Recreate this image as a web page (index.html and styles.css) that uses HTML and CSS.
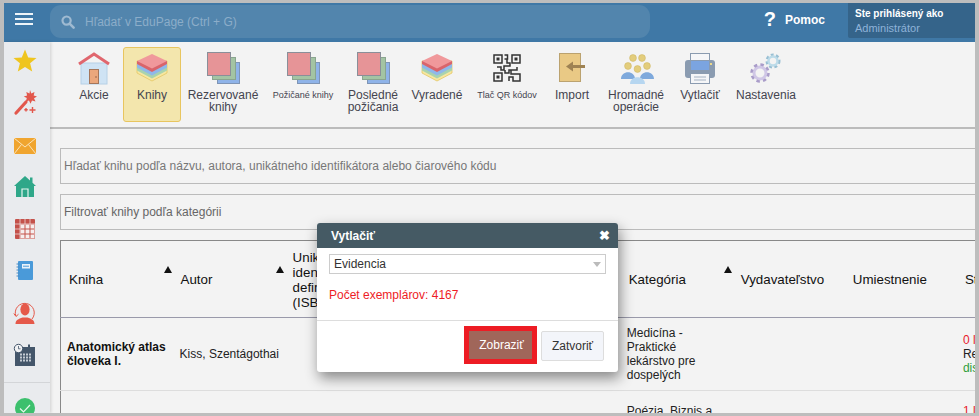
FILE: index.html
```html
<!DOCTYPE html>
<html lang="sk">
<head>
    <meta charset="UTF-8">
    <meta name="viewport" content="width=device-width, initial-scale=1.0">
    <title>Knižnica - EduPage</title>
    <link rel="stylesheet" href="styles.css">
</head>
<body>
<section class="frame">
    <header class="topbar">
        <div class="menu-btn"><span></span><span></span><span></span></div>
        <div class="search">
            <svg class="search-icon" width="14" height="14" viewBox="0 0 14 14"><circle cx="5.6" cy="5.6" r="4.1" fill="none" stroke="#9fbad1" stroke-width="2.2"/><path d="M8.6 8.6l4 4" stroke="#9fbad1" stroke-width="2.6" stroke-linecap="round"/></svg>
            <span>Hľadať v EduPage (Ctrl + G)</span>
        </div>
        <div class="help"><b>?</b><span>Pomoc</span></div>
        <div class="user">
            <strong>Ste prihlásený ako</strong>
            <span>Administrátor</span>
        </div>
    </header>
    <div class="content">
        <nav class="sidebar">
            <div class="side-item"><svg width="30" height="30" viewBox="0 0 30 30"><path d="M15 2.5l3.2 7.9 8.3.6-6.4 5.3 2.1 8.2L15 20.1l-7.200 4.400 2.100-8.200L3.500 11l8.300-.6z" fill="#efc51f"/></svg></div>
            <div class="side-item"><svg width="30" height="30" viewBox="0 0 30 30"><path d="M6 24L16 13" stroke="#e2574c" stroke-width="3.200" stroke-linecap="round"/><path d="M20 1l1.300 3.500L24.500 3l-.8 3.500 3.300 1-3 1.800 1.500 3.200-3.500-1-1.500 3.200-1.500-3.200-3.200 1 1-3.400-3-1.600 3.300-1-.8-3.500 3.200 1.500z" fill="#e2574c"/><path d="M22.500 18v6M19.500 21h6M16 19v3.500M14.300 20.800h3.400" stroke="#e2574c" stroke-width="1.400"/></svg></div>
            <div class="side-item"><svg width="30" height="30" viewBox="0 0 30 30"><rect x="4" y="7" width="22" height="16" fill="#f0a52f"/><path d="M4 7l11 9 11-9M4 23l7.500-9.500M26 23l-7.500-9.500" fill="none" stroke="#fbe3b8" stroke-width="1"/></svg></div>
            <div class="side-item"><svg width="30" height="30" viewBox="0 0 30 30"><path d="M15 3l5 4.500V4.500h2.500v5.200L26 13h-2v11H6V13H4z" fill="#2fa789"/><path d="M12 24v-8h6v8" fill="none" stroke="#e6f5f0" stroke-width="1.200"/></svg></div>
            <div class="side-item"><svg width="30" height="30" viewBox="0 0 30 30"><rect x="5" y="4" width="20" height="20" rx="1" fill="#c4524b"/><path d="M10 4v20M15 4v20M20 4v20M5 9h20M5 14h20M5 19h20" stroke="#eed6d4" stroke-width=".8"/><rect x="10.500" y="9.500" width="14" height="14" fill="#f6eeee"/><path d="M15 9.500v14M20 9.500v14M10.500 14h14M10.500 19h14" stroke="#c4524b" stroke-width="1"/></svg></div>
            <div class="side-item"><svg width="30" height="30" viewBox="0 0 30 30"><rect x="8" y="4" width="15" height="19" rx="1" fill="#4a9ad9"/><path d="M6.500 7h3M6.500 10h3M6.500 13h3M6.500 16h3M6.500 19h3" stroke="#4a8cc4" stroke-width="1"/><rect x="12" y="7" width="8" height="4.500" fill="#e8f2fa"/><path d="M13 9.200h6" stroke="#4a9ad9" stroke-width="1"/></svg></div>
            <div class="side-item"><svg width="30" height="30" viewBox="0 0 30 30"><path d="M5.800 17A9.500 9.500 0 1 1 22 20" fill="none" stroke="#e5594a" stroke-width="1"/><path d="M3.800 14.500l2.200 3 2.500-2.300" fill="none" stroke="#e5594a" stroke-width="1"/><ellipse cx="15" cy="10.500" rx="4.600" ry="6" fill="#e5594a"/><path d="M5.500 25c0-4 3-5 7-6.500h5c4 1.500 7 2.500 7 6.500z" fill="#e5594a"/></svg></div>
            <div class="side-item"><svg width="30" height="30" viewBox="0 0 30 30"><rect x="5" y="6" width="20" height="19" fill="#44566a"/><rect x="18" y="3.500" width="2" height="4" fill="#44566a"/><circle cx="8.500" cy="7.500" r="4.200" fill="#f1f2f4" stroke="#44566a" stroke-width="1"/><path d="M8.500 5v2.800h2" fill="none" stroke="#44566a" stroke-width=".8"/><path d="M10 13.500h11M10 16.500h11M10 19.500h11" stroke="#c5ccd4" stroke-width="2" stroke-dasharray="2 1"/></svg></div>
            <div class="side-divider"></div>
            <div class="side-check"><svg width="24" height="24" viewBox="0 0 24 24"><circle cx="12" cy="12" r="10" fill="#3cc06d"/><path d="M7 12.500l3.500 3.500 6.500-7" fill="none" stroke="#e6f8ec" stroke-width="1.200"/></svg></div>
        </nav>
        <main class="main">
            <div class="toolbar">
                <div class="tool">
                    <svg width="36" height="36" viewBox="0 0 36 36"><rect x="5" y="13" width="26" height="21" fill="#cfe3f4" stroke="#b6d0e6"/><path d="M3 14L18 4l15 10" fill="none" stroke="#e0666e" stroke-width="3"/><rect x="13.500" y="19.500" width="9" height="14" fill="#eba77c" stroke="#a5765a"/><circle cx="20" cy="27" r=".7" fill="#7a4e38"/></svg>
                    <p>Akcie</p>
                </div>
                <div class="tool active">
                    <svg width="36" height="36" viewBox="0 0 36 36"><use href="#stack"/></svg>
                    <p>Knihy</p>
                </div>
                <div class="tool">
                    <svg width="36" height="36" viewBox="0 0 36 36"><use href="#squares"/></svg>
                    <p>Rezervované<br>knihy</p>
                </div>
                <div class="tool">
                    <svg width="36" height="36" viewBox="0 0 36 36"><use href="#squares"/></svg>
                    <p class="small">Požičané knihy</p>
                </div>
                <div class="tool">
                    <svg width="36" height="36" viewBox="0 0 36 36"><use href="#squares"/></svg>
                    <p>Posledné<br>požičania</p>
                </div>
                <div class="tool">
                    <svg width="36" height="36" viewBox="0 0 36 36"><use href="#stack"/></svg>
                    <p>Vyradené</p>
                </div>
                <div class="tool">
                    <svg width="36" height="36" viewBox="0 0 36 36">
                        <g fill="none" stroke="#333" stroke-width="1.500">
                            <rect x="5" y="5" width="8" height="8"/><rect x="23" y="5" width="8" height="8"/><rect x="5" y="23" width="8" height="8"/>
                            <path d="M15.500 5h3v4h-3M18 9v4h3v3h-6v4h-3v-3H8M16 20v3h4v-3h8v-3M22 20v4h9v7h-7v-4h-4v4"/>
                        </g>
                        <g fill="#333"><rect x="7.500" y="7.500" width="3" height="3"/><rect x="25.500" y="7.500" width="3" height="3"/><rect x="7.500" y="25.500" width="3" height="3"/></g>
                    </svg>
                    <p class="small">Tlač QR kódov</p>
                </div>
                <div class="tool">
                    <svg width="36" height="36" viewBox="0 0 36 36"><rect x="5.500" y="3.500" width="21" height="28" fill="#e9c985" stroke="#bba26f"/><path d="M31 16.500H14" stroke="#9e8253" stroke-width="3"/><path d="M12 16.500l7-5v10z" fill="#9e8253"/></svg>
                    <p>Import</p>
                </div>
                <div class="tool">
                    <svg width="36" height="36" viewBox="0 0 36 36">
                        <g fill="#e3cd7c" stroke="#d0b866" stroke-width=".6"><circle cx="15" cy="8" r="3.400"/><circle cx="24" cy="8" r="3.400"/><circle cx="10" cy="16" r="3.400"/><circle cx="29" cy="16" r="3.400"/><circle cx="19.500" cy="19" r="3.400"/></g>
                        <path d="M3 29c0-9 14-9 14 0zM22 29c0-9 14-9 14 0z" fill="#7ea9dc"/>
                        <path d="M12 34c0-9 15-9 15 0z" fill="#b6d6f0"/>
                    </svg>
                    <p>Hromadné<br>operácie</p>
                </div>
                <div class="tool">
                    <svg width="36" height="36" viewBox="0 0 36 36"><rect x="8.500" y="3.500" width="19" height="10" fill="#f5f6f8" stroke="#8a9bb0"/><rect x="3" y="10" width="30" height="18" rx="3" fill="#8a9bb0"/><rect x="9" y="11" width="18" height="9" fill="#7ba4e0"/><rect x="28" y="13" width="2" height="2" fill="#ecd98a"/><rect x="8.500" y="23.500" width="19" height="10" fill="#f5f6f8" stroke="#8a9bb0"/><path d="M12 27h12M12 30h12" stroke="#a5b2c2"/></svg>
                    <p>Vytlačiť</p>
                </div>
                <div class="tool">
                    <svg width="36" height="36" viewBox="0 0 36 36">
                        <g fill="none">
                            <circle cx="12" cy="23" r="6" stroke="#d0c7e6" stroke-width="3"/>
                            <circle cx="12" cy="23" r="8.500" stroke="#a99cc9" stroke-width="2.500" stroke-dasharray="3.500 3.200"/>
                            <circle cx="25" cy="11" r="4.500" stroke="#bcdbe9" stroke-width="2.500"/>
                            <circle cx="25" cy="11" r="6.500" stroke="#98bfd3" stroke-width="2" stroke-dasharray="3 2.500"/>
                        </g>
                    </svg>
                    <p>Nastavenia</p>
                </div>
            </div>
            <div class="field placeholder">Hľadať knihu podľa názvu, autora, unikátneho identifikátora alebo čiarového kódu</div>
            <div class="field">Filtrovať knihy podľa kategórii</div>
            <table class="books">
                <thead>
                    <tr>
                        <th><div class="th-inner">Kniha<i class="sort"></i></div></th>
                        <th><div class="th-inner">Autor<i class="sort"></i></div></th>
                        <th>Unikátny identifikátor definovaný (ISBN)</th>
                        <th></th>
                        <th></th>
                        <th><div class="th-inner">Kategória<i class="sort"></i></div></th>
                        <th>Vydavateľstvo</th>
                        <th>Umiestnenie</th>
                        <th>Stav</th>
                    </tr>
                </thead>
                <tbody>
                    <tr>
                        <td><strong>Anatomický atlas človeka I.</strong></td>
                        <td class="author">Kiss, Szentágothai</td>
                        <td></td>
                        <td></td>
                        <td></td>
                        <td>Medicína - Praktické lekárstvo pre dospelých</td>
                        <td></td>
                        <td></td>
                        <td class="state"><span class="red">0 ľudí</span><br>Rezervované<br><span class="green">dispozícia</span></td>
                    </tr>
                    <tr class="cut-row">
                        <td></td>
                        <td></td>
                        <td></td>
                        <td></td>
                        <td></td>
                        <td>Poézia, Biznis a</td>
                        <td></td>
                        <td></td>
                        <td class="state"><span class="red">1 ľudí</span></td>
                    </tr>
                </tbody>
            </table>
        </main>
    </div>
    <div class="modal">
        <div class="modal-head"><span>Vytlačiť</span><b>✖</b></div>
        <div class="modal-body">
            <div class="select">Evidencia<i></i></div>
            <p class="count">Počet exemplárov: 4167</p>
        </div>
        <div class="modal-foot">
            <div class="highlight"><button class="btn-show">Zobraziť</button></div>
            <button class="btn-close">Zatvoriť</button>
        </div>
    </div>
</section>
<svg class="defs" width="0" height="0">
    <defs>
        <g id="stack">
            <path d="M3 11v12l15 8 15-8V11z" fill="#f7e7a0" stroke="#e3c763" stroke-width=".8"/>
            <path d="M3 11v9.500l15 8 15-8V11z" fill="#a9d3ae"/>
            <path d="M3 11v6.500l15 8 15-8V11z" fill="#8fb8ea"/>
            <path d="M3 11v3l15 8 15-8v-3z" fill="#d9646b"/>
            <path d="M18 4l15 7-15 7.500L3 11z" fill="#f0989b"/>
        </g>
        <g id="squares">
            <rect x="12.500" y="12.500" width="22" height="21" fill="#8fb3e8" stroke="#7f95b5"/>
            <rect x="7.500" y="7.500" width="23" height="22" fill="#a3c4a3" stroke="#8aa58f"/>
            <rect x="2.500" y="2.500" width="23" height="23" fill="#e69497" stroke="#8a8f99"/>
        </g>
    </defs>
</svg>
</body>
</html>
```

FILE: styles.css
```css
*{
    margin: 0;
    padding: 0;
    box-sizing: border-box;
}
html, body{
    height: 416px;
    overflow: hidden;
}
body{
    font-family: "Liberation Sans", Arial, sans-serif;
    font-size: 12px;
    color: #222;
    background: #bdbdbd;
}
.defs{
    position: absolute;
}
.frame{
    position: relative;
    display: flex;
    flex-direction: column;
    height: 416px;
    border: solid #bdbdbd;
    border-width: 3px 4px;
    overflow: hidden;
}

/* top bar */
.topbar{
    display: flex;
    flex: none;
    height: 39px;
    background: #3f78a6;
    color: white;
}
.menu-btn{
    display: flex;
    flex-direction: column;
    gap: 3px;
    width: 46px;
    padding: 10px 0 0 11px;
}
.menu-btn span{
    width: 18px;
    height: 2px;
    background: #eef4f8;
}
.search{
    display: flex;
    align-items: center;
    gap: 10px;
    width: 600px;
    height: 33px;
    margin-top: 2px;
    padding-left: 11px;
    border-radius: 11px;
    background: #5285ad;
    color: #8cadc9;
}
.help{
    display: flex;
    align-items: center;
    gap: 9px;
    height: 33px;
    margin-left: auto;
    margin-right: 23px;
    font-size: 12px;
    font-weight: bold;
}
.help b{
    font-size: 20px;
}
.user{
    display: flex;
    flex-direction: column;
    gap: 3px;
    width: 127px;
    height: 35px;
    padding: 5px 0 0 7px;
    background: #35648a;
    border-bottom-left-radius: 2px;
    font-size: 10px;
}
.user span{
    color: #8fb3d9;
    font-size: 11px;
}

/* left icons */
.content{
    display: flex;
    flex: 1;
    min-height: 0;
}
.sidebar{
    flex: none;
    width: 46px;
    background: #e9ebee;
    box-shadow: 1px 0 3px rgba(0,0,0,0.15);
    overflow: hidden;
    z-index: 1;
}
.side-item{
    display: flex;
    align-items: center;
    justify-content: center;
    height: 42px;
    padding-right: 4px;
}
.side-item svg{
    margin-top: -2px;
}
.side-divider{
    height: 1px;
    margin-top: 4px;
    background: #d3d5d8;
}
.side-check{
    display: flex;
    justify-content: center;
    margin-top: 13px;
    padding-right: 4px;
}

/* toolbar */
.main{
    flex: 1;
    min-width: 0;
    background: #f3f3f3;
    overflow: hidden;
}
.toolbar{
    display: grid;
    grid-template-columns: 58px 58px 84px 76px 64px 64px 76px 54px 74px 54px 78px;
    height: 87px;
    padding: 5px 0 0 15px;
    border-bottom: 2px solid #bbb;
}
.tool{
    display: flex;
    flex-direction: column;
    align-items: center;
    height: 75px;
    padding-top: 2px;
    border: 1px solid transparent;
    border-radius: 3px;
    color: #44444f;
    text-align: center;
    line-height: 12px;
}
.tool svg{
    flex: none;
    margin-bottom: 3px;
}
.tool p{
    white-space: nowrap;
}
.tool .small{
    font-size: 9px;
}
.tool.active{
    background: #f3e6ad;
    border-color: #e8c55f;
}

/* search fields */
.field{
    display: flex;
    align-items: center;
    width: 1200px;
    height: 36px;
    margin: 10px 0 0 10px;
    padding-left: 3px;
    border: 1px solid #bbb;
    color: #666;
}
.field.placeholder{
    margin-top: 19px;
    color: #777;
}

/* table */
.books{
    width: 1009px;
    margin: 10px 0 0 10px;
    border-collapse: collapse;
    border-top: 1px solid #888;
    border-left: 1px solid #888;
    table-layout: fixed;
}
.books th{
    width: 112px;
    height: 77px;
    padding: 1px 1px 0 8px;
    border-bottom: 1px solid #99a;
    font-size: 13.330px;
    font-weight: normal;
    line-height: 15px;
    text-align: left;
    color: #111;
}
.th-inner{
    display: flex;
    align-items: center;
    justify-content: space-between;
}
.sort{
    width: 0;
    height: 0;
    margin-bottom: 20px;
    border: solid transparent;
    border-width: 0 4px 7px;
    border-bottom-color: #111;
}
.books td{
    height: 73px;
    padding: 0 6px;
    border-bottom: 1px solid #ddd;
    line-height: 14px;
    vertical-align: middle;
}
.books td.author{
    padding: 0 0 0 7px;
    white-space: nowrap;
}
.books td.state{
    white-space: nowrap;
    overflow: hidden;
}
.books strong{
    color: #111;
}
.cut-row td{
    vertical-align: top;
    padding-top: 13px;
}
.red{
    color: #e8202a;
}
.green{
    color: #2e9e3a;
}

/* dialog */
.modal{
    position: absolute;
    left: 313px;
    top: 220px;
    width: 301px;
    height: 149px;
    display: flex;
    flex-direction: column;
    background: white;
    border-radius: 3px;
    box-shadow: 2px 6px 14px rgba(0,0,0,0.45);
    overflow: hidden;
    z-index: 5;
}
.modal-head{
    display: flex;
    flex: none;
    align-items: center;
    justify-content: space-between;
    height: 25px;
    padding: 0 8px 0 14px;
    background: #455a64;
    color: white;
    font-weight: bold;
}
.modal-head b{
    font-size: 13px;
}
.modal-body{
    flex: none;
    height: 73px;
    padding: 6px 12px 0;
    border-bottom: 1px solid #ddd;
}
.select{
    display: flex;
    align-items: center;
    justify-content: space-between;
    height: 20px;
    padding: 0 4px;
    border: 1px solid #ccc;
    color: #333;
}
.select i{
    width: 0;
    height: 0;
    border: solid transparent;
    border-width: 5px 4px 0;
    border-top-color: #bbb;
}
.count{
    margin-top: 14px;
    color: #ee1c25;
}
.modal-foot{
    display: flex;
    justify-content: flex-end;
    align-items: flex-start;
    gap: 4px;
    padding: 5px 14px 0 0;
}
.highlight{
    padding: 5px;
    background: #ed1c24;
}
.highlight .btn-show{
    display: block;
    width: 63px;
    height: 28px;
    padding-left: 2px;
    border: 0;
    background: #a0665a;
    color: white;
    font: 12px "Liberation Sans", Arial, sans-serif;
}
.btn-close{
    width: 63px;
    height: 30px;
    margin-top: 5px;
    border: 1px solid #ddd;
    border-radius: 2px;
    background: #f3f5fa;
    color: #333;
    font: 12px "Liberation Sans", Arial, sans-serif;
}
```
